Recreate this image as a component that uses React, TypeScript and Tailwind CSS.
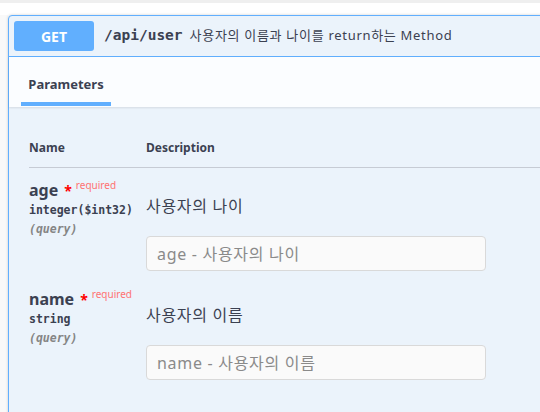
const sans = "font-['Noto_Sans','Noto_Sans_CJK_KR',sans-serif]";
const mono = "font-['DejaVu_Sans_Mono','Noto_Sans_CJK_KR',monospace]";

interface Param {
  name: string;
  type: string;
  description: string;
  placeholder: string;
}

const params: Param[] = [
  { name: 'age', type: 'integer($int32)', description: '사용자의 나이', placeholder: 'age - 사용자의 나이' },
  { name: 'name', type: 'string', description: '사용자의 이름', placeholder: 'name - 사용자의 이름' },
];

function ParamRow({ param }: { param: Param }) {
  return (
    <div className="flex pt-[12px] pb-[6px]">
      {/* Name column */}
      <div className="w-[117px] shrink-0">
        <div className="flex h-[20px] items-center">
          <span className={`${sans} text-[16px] font-bold text-[#3b4151]`}>{param.name}</span>
          <span className={`${sans} ml-[6px] text-[14px] font-bold text-[#ff0000]`}>*</span>
          <span className={`${sans} relative -top-[5px] ml-[4px] text-[10px] text-[#ff7272]`}>required</span>
        </div>
        <div className={`${mono} h-[20px] leading-[20px] text-[11.5px] font-bold text-[#3b4151]`}>{param.type}</div>
        <div className={`${mono} h-[18px] leading-[18px] text-[11.5px] font-semibold italic text-[#858585]`}>(query)</div>
      </div>

      {/* Description column */}
      <div className="flex-1">
        <p className={`${sans} mt-[14px] h-[24px] leading-[24px] text-[16px] tracking-[0.7px] text-[#3b4151]`}>{param.description}</p>
        <input
          className={`${sans} mt-[18px] h-[35px] w-[340px] rounded-[4px] border border-[#d9d9d9] bg-[#fafafa] px-[10px] text-[16px] tracking-[0.7px] text-[#3b4151] placeholder:text-[#8a8a8a] outline-none`}
          placeholder={param.placeholder}
        />
      </div>
    </div>
  );
}

export default function App() {
  return (
    <div className="h-[412px] w-[540px] overflow-hidden bg-white">
      <div className="h-[3px] bg-[#efefef]" />
      <div className="flex h-[409px] pt-[12px]">
        <div className="w-[8px] shrink-0 bg-[#f9f9f9]" />
        <div className="h-[440px] w-[600px] shrink-0 rounded-tl-[4px] border border-[#61affe] bg-[#ebf3fb] shadow-[0_0_3px_rgba(0,0,0,0.19)]">
          {/* Summary */}
          <div className="flex h-[41px] items-center border-b border-[#61affe] pl-[5px]">
            <div className={`${sans} flex h-[30px] w-[80px] items-center justify-center rounded-[3px] bg-[#61affe] text-[14px] font-bold text-white`}>
              GET
            </div>
            <span className={`${mono} ml-[10px] text-[14.5px] font-semibold text-[#3b4151]`}>/api/user</span>
            <span className={`${sans} ml-[7px] text-[13px] tracking-[0.7px] text-[#3b4151]`}>사용자의 이름과 나이를 return하는 Method</span>
          </div>

          {/* Tab header */}
          <div className="flex h-[50px] items-end bg-[#fbfdff] pl-[12px] shadow-[0_1px_2px_rgba(0,0,0,0.1)]">
            <div className="w-[90px]">
              <div className={`${sans} text-center text-[13px] font-bold text-[#3b4151]`}>Parameters</div>
              <div className="mt-[8px] mb-[1px] h-[4px] bg-[#61affe]" />
            </div>
          </div>

          {/* Parameters table */}
          <div className="pl-[20px] pt-[32px]">
            <div className={`${sans} flex border-b border-[#c6cbd4] pb-[10px] text-[12px] font-bold text-[#3b4151]`}>
              <div className="w-[117px]">Name</div>
              <div>Description</div>
            </div>
            {params.map((p) => (
              <ParamRow key={p.name} param={p} />
            ))}
          </div>
        </div>
      </div>
    </div>
  );
}
